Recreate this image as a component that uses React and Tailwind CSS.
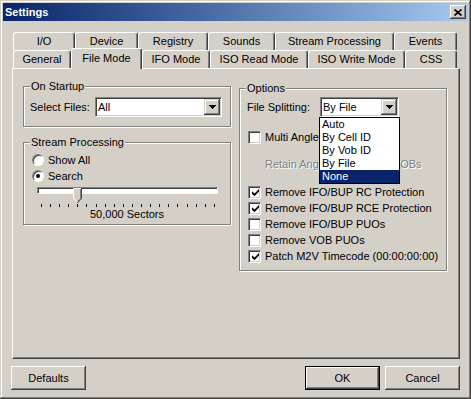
import React from 'react';

const backTabs = [
  { label: 'I/O', w: 'w-[62px]' },
  { label: 'Device', w: 'w-[63px]' },
  { label: 'Registry', w: 'w-[70px]' },
  { label: 'Sounds', w: 'w-[67px]' },
  { label: 'Stream Processing', w: 'w-[119px]' },
  { label: 'Events', w: 'w-[63px]' },
];

const frontTabs = [
  { label: 'General', w: 'w-[58px]' },
  { label: 'File Mode', w: 'w-[71px]', selected: true },
  { label: 'IFO Mode', w: 'w-[68px]' },
  { label: 'ISO Read Mode', w: 'w-[98px]' },
  { label: 'ISO Write Mode', w: 'w-[97px]' },
  { label: 'CSS', w: 'w-[52px]' },
];

const splitItems = ['Auto', 'By Cell ID', 'By Vob ID', 'By File', 'None'];

const options = [
  { label: 'Remove IFO/BUP RC Protection', checked: true },
  { label: 'Remove IFO/BUP RCE Protection', checked: true },
  { label: 'Remove IFO/BUP PUOs', checked: false },
  { label: 'Remove VOB PUOs', checked: false },
  { label: 'Patch M2V Timecode (00:00:00:00)', checked: true },
];

function Tab({ label, w, selected }) {
  return (
    <div
      className={`${w} ${
        selected ? 'relative z-10 -mt-[2px] h-[21px] pb-[2px]' : 'h-[18px]'
      } flex items-center justify-center rounded-t-[3px] border-t border-l border-r border-t-white border-l-white border-r-[#404040] bg-[#d4d0c8] shadow-[inset_-1px_0_#808080] leading-[13px]`}
    >
      {label}
    </div>
  );
}

function Group({ title, className, children }) {
  return (
    <div className={`relative border border-[#808080] shadow-[inset_1px_1px_#fff,1px_1px_#fff] ${className}`}>
      <span className="absolute left-[6px] -top-[7px] bg-[#d4d0c8] px-[1px] leading-[13px]">{title}</span>
      {children}
    </div>
  );
}

function Arrow() {
  return (
    <svg width="7" height="4" viewBox="0 0 7 4" shapeRendering="crispEdges">
      <path d="M0 0h7L3.5 4z" fill="#000" />
    </svg>
  );
}

function Combo({ value, w, children }) {
  return (
    <div className={`relative flex h-[20px] ${w} items-center border border-t-[#808080] border-l-[#808080] border-r-white border-b-white bg-white shadow-[inset_1px_1px_#404040,inset_-1px_-1px_#d4d0c8]`}>
      <span className="flex-1 pl-[2px] leading-[13px]">{value}</span>
      <span className="mr-[1px] flex h-[16px] w-[16px] items-center justify-center bg-[#d4d0c8] shadow-[inset_-1px_-1px_#404040,inset_1px_1px_#d4d0c8,inset_-2px_-2px_#808080,inset_2px_2px_#fff]">
        <Arrow />
      </span>
      {children}
    </div>
  );
}

function Check({ checked }) {
  return (
    <span className="flex h-[13px] w-[13px] shrink-0 items-center justify-center border border-t-[#808080] border-l-[#808080] border-r-white border-b-white bg-white shadow-[inset_1px_1px_#404040,inset_-1px_-1px_#d4d0c8]">
      {checked && (
        <svg width="7" height="7" viewBox="0 0 7 7" className="ml-[1px] mt-[1px]">
          <path d="M0 2.3L2.5 4.6L7 0V2.6L2.5 7.2L0 4.8Z" fill="#000" />
        </svg>
      )}
    </span>
  );
}

function Radio({ checked }) {
  return (
    <span className="flex h-[12px] w-[12px] shrink-0 items-center justify-center rounded-full border border-t-[#808080] border-l-[#808080] border-r-white border-b-white bg-white shadow-[inset_1px_1px_#404040]">
      {checked && <span className="h-[4px] w-[4px] rounded-full bg-black" />}
    </span>
  );
}

function Button({ children, isDefault }) {
  return (
    <button
      className={`flex h-[24px] w-[75px] items-center justify-center bg-[#d4d0c8] leading-[13px] ${
        isDefault
          ? 'border border-black shadow-[inset_-1px_-1px_#404040,inset_1px_1px_#fff,inset_-2px_-2px_#808080]'
          : 'shadow-[inset_-1px_-1px_#404040,inset_1px_1px_#fff,inset_-2px_-2px_#808080,inset_2px_2px_#d4d0c8]'
      }`}
    >
      {children}
    </button>
  );
}

export default function App() {
  const ticks = Array.from({ length: 20 });

  return (
    <div className="flex h-[399px] w-[471px] flex-col bg-[#d4d0c8] p-[3px] font-['Liberation_Sans',Arial,sans-serif] text-[11px] text-black shadow-[inset_-1px_-1px_#404040,inset_1px_1px_#d4d0c8,inset_-2px_-2px_#808080,inset_2px_2px_#fff]">
      {/* Title bar */}
      <div className="flex h-[18px] items-center justify-between bg-linear-to-r from-[#0a246a] to-[#a6caf0] pl-[2px] pr-[2px]">
        <span className="font-bold leading-[13px] text-white">Settings</span>
        <span className="flex h-[14px] w-[16px] items-center justify-center bg-[#d4d0c8] shadow-[inset_-1px_-1px_#404040,inset_1px_1px_#fff,inset_-2px_-2px_#808080]">
          <svg width="8" height="7" viewBox="0 0 8 7">
            <path d="M0.5 0.5L7.5 6.5M7.5 0.5L0.5 6.5" stroke="#000" strokeWidth="1.7" />
          </svg>
        </span>
      </div>

      <div className="flex flex-col pl-[9px] pt-[11px]">
        {/* Tabs */}
        <div className="flex flex-col pl-[1px]">
          <div className="flex h-[18px] items-start">
            {backTabs.map((t) => (
              <Tab key={t.label} {...t} />
            ))}
          </div>
          <div className="flex h-[18px] items-start">
            {frontTabs.map((t) => (
              <Tab key={t.label} {...t} />
            ))}
          </div>
        </div>

        {/* Tab panel */}
        <div className="flex h-[291px] w-[448px] gap-[8px] border border-t-white border-l-white border-r-[#404040] border-b-[#404040] pl-[10px] pt-[17px] shadow-[inset_-1px_-1px_#808080]">
          <div className="flex w-[208px] flex-col">
            <Group title="On Startup" className="pt-[10px] pb-[9px] pl-[6px]">
              <div className="flex items-center">
                <span className="w-[65px] leading-[13px]">Select Files:</span>
                <Combo value="All" w="w-[127px]" />
              </div>
            </Group>

            <Group title="Stream Processing" className="mt-[15px] pt-[9px] pb-[3px]">
              <div className="flex h-[16px] items-center gap-[4px] pl-[8px]">
                <Radio />
                <span className="leading-[13px]">Show All</span>
              </div>
              <div className="flex h-[16px] items-center gap-[4px] pl-[8px]">
                <Radio checked />
                <span className="leading-[13px]">Search</span>
              </div>
              <div className="relative ml-[13px] mt-[1px] h-[16px] w-[181px]">
                <div className="mt-[3px] h-[7px] w-full border border-t-[#808080] border-l-[#808080] border-r-white border-b-white bg-white shadow-[inset_1px_1px_#404040]" />
                <svg width="9" height="15" viewBox="0 0 9 15" className="absolute left-[36px] top-[1px]">
                  <path d="M0 0H9V10.5L4.5 15L0 10.5Z" fill="#d4d0c8" />
                  <path d="M0.5 10.5V0.5H8" stroke="#fff" fill="none" />
                  <path d="M0.5 10.5L4 14" stroke="#fff" fill="none" />
                  <path d="M8.5 0V10.7L4.3 14.8" stroke="#404040" fill="none" />
                  <path d="M7.5 1V10.3L4.3 13.5" stroke="#808080" fill="none" />
                </svg>
              </div>
              <div className="ml-[17px] mt-[1px] flex h-[3px] w-[174px] justify-between">
                {ticks.map((_, i) => (
                  <span key={i} className="h-[3px] w-[1px] bg-black" />
                ))}
              </div>
              <div className="mt-[1px] text-center leading-[13px]">50,000 Sectors</div>
            </Group>
          </div>

          <Group title="Options" className="mt-[2px] h-[183px] w-[208px] pl-[7px] pt-[8px]">
            <div className="flex items-center">
              <span className="w-[73px] leading-[13px]">File Splitting:</span>
              <Combo value="By File" w="w-[79px]">
                <div className="absolute left-[-2px] top-[19px] z-20 w-[81px] border border-black bg-white">
                  {splitItems.map((item) => (
                    <div
                      key={item}
                      className={`h-[13px] pl-[2px] leading-[13px] ${item === 'None' ? 'bg-[#0a246a] text-white' : ''}`}
                    >
                      {item}
                    </div>
                  ))}
                </div>
              </Combo>
            </div>

            <div className="mt-[12px] flex h-[16px] items-center gap-[4px] overflow-hidden pl-[1px] whitespace-nowrap">
              <Check />
              <span className="leading-[13px]">Multi Angle Processing</span>
            </div>
            <div className="mt-[11px] flex h-[16px] items-center whitespace-nowrap pl-[18px]">
              <span className="leading-[13px] text-[#808080] [text-shadow:1px_1px_0_#fff]">Retain Angle Data in Split VOBs</span>
            </div>

            <div className="mt-[12px] flex flex-col">
              {options.map((o) => (
                <div key={o.label} className="flex h-[16px] items-center gap-[4px] whitespace-nowrap pl-[1px]">
                  <Check checked={o.checked} />
                  <span className="leading-[13px]">{o.label}</span>
                </div>
              ))}
            </div>
          </Group>
        </div>
      </div>

      {/* Footer buttons */}
      <div className="mt-[7px] flex items-center justify-between pl-[8px] pr-[8px]">
        <Button>Defaults</Button>
        <div className="flex gap-[5px]">
          <Button isDefault>OK</Button>
          <Button>Cancel</Button>
        </div>
      </div>
    </div>
  );
}
